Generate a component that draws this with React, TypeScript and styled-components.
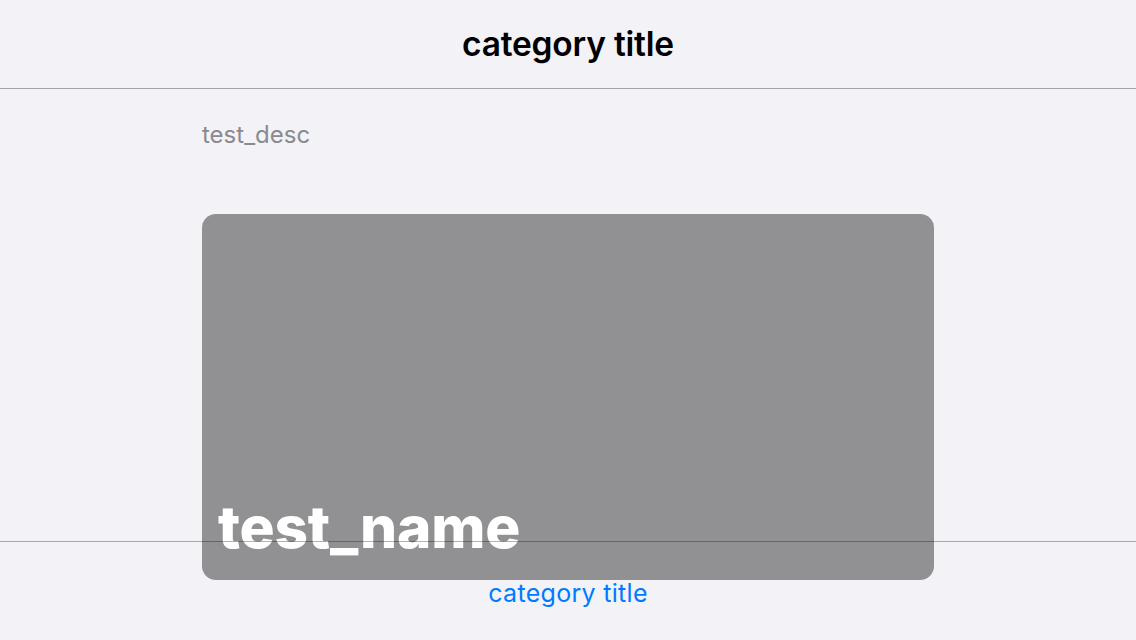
import React from "react";
import styled, { createGlobalStyle } from "styled-components";

const Global = createGlobalStyle`
  html, body { margin: 0; padding: 0; background: #f2f2f7; }
  body { font-family: Inter, "Noto Sans", "Liberation Sans", sans-serif; -webkit-font-smoothing: antialiased; }
  #root { width: 1136px; height: 640px; }
`;

const Screen = styled.div`
  position: relative;
  width: 1136px;
  height: 640px;
  overflow: hidden;
  background: #f2f2f7;
  display: flex;
  flex-direction: column;
`;

const NavBar = styled.header`
  height: 88px;
  flex: none;
  display: flex;
  align-items: center;
  justify-content: center;
  border-bottom: 1px solid #a5a5a9;
`;

const NavTitle = styled.h1`
  margin: 0;
  font-size: 33.5px;
  font-weight: 600;
  color: #000;
  letter-spacing: -0.2px;
`;

const Content = styled.main`
  width: 732px;
  margin: 0 auto;
  display: flex;
  flex-direction: column;
`;

const Desc = styled.p`
  margin: 30px 0 0 0;
  height: 32px;
  line-height: 32px;
  font-size: 24px;
  color: #8a8a8e;
`;

const Card = styled.div`
  margin-top: 63px;
  height: 366px;
  border-radius: 14px;
  background: #919193;
  display: flex;
  flex-direction: column;
  justify-content: flex-end;
  padding: 0 16px 20px;
  box-sizing: border-box;
`;

const CardName = styled.h2`
  margin: 0;
  font-size: 58.5px;
  font-weight: 800;
  line-height: 66px;
  color: #fff;
  letter-spacing: -0.2px;
`;

const TabBar = styled.nav`
  position: absolute;
  left: 0;
  right: 0;
  bottom: 0;
  height: 99px;
  border-top: 1px solid rgba(0, 0, 0, 0.3);
  display: flex;
  justify-content: center;
  align-items: flex-start;
  box-sizing: border-box;
`;

const TabLabel = styled.span`
  margin-top: 36px;
  font-size: 25px;
  line-height: 30px;
  letter-spacing: 0.3px;
  color: #007aff;
`;

export default function App() {
  return (
    <Screen>
      <Global />
      <NavBar>
        <NavTitle>category title</NavTitle>
      </NavBar>
      <Content>
        <Desc>test_desc</Desc>
        <Card>
          <CardName>test_name</CardName>
        </Card>
      </Content>
      <TabBar>
        <TabLabel>category title</TabLabel>
      </TabBar>
    </Screen>
  );
}
